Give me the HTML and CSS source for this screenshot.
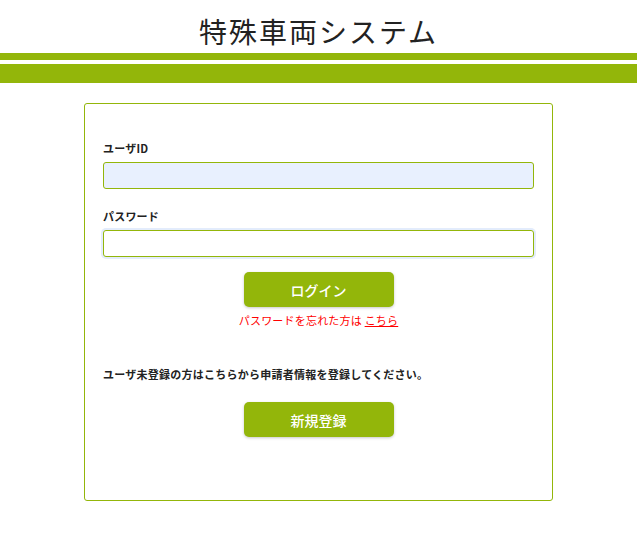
FILE: index.html
```html
<!DOCTYPE html>
<html lang="ja">
<head>
<meta charset="utf-8">
<title>特殊車両システム</title>
<link rel="stylesheet" href="styles.css">
</head>
<body>
<header class="site-header">
  <h1 class="site-title">特殊車両システム</h1>
  <div class="band band-thin"></div>
  <div class="band band-thick"></div>
</header>
<main class="login-card">
  <div class="field">
    <label class="field-label" for="uid">ユーザID</label>
    <input class="field-input autofill" id="uid" type="text">
  </div>
  <div class="field field-second">
    <label class="field-label" for="pw">パスワード</label>
    <input class="field-input focused" id="pw" type="password">
  </div>
  <div class="action">
    <button class="btn" type="button">ログイン</button>
  </div>
  <p class="forgot">パスワードを忘れた方は <a href="#" class="forgot-link">こちら</a></p>
  <p class="register-note">ユーザ未登録の方はこちらから申請者情報を登録してください。</p>
  <div class="action action-register">
    <button class="btn" type="button">新規登録</button>
  </div>
</main>
</body>
</html>
```
FILE: styles.css
```css
html, body {
  margin: 0;
  padding: 0;
  background: #ffffff;
}
body {
  font-family: "Noto Sans CJK JP", "Noto Sans", sans-serif;
  color: #222222;
}
.site-header {
  padding-top: 12px;
}
.site-title {
  margin: 0 0 2px 0;
  font-size: 28px;
  line-height: 39px;
  font-weight: 400;
  letter-spacing: 2px;
  text-align: center;
  color: #222222;
}
.band {
  background: #93b60a;
}
.band-thin {
  height: 7px;
}
.band-thick {
  height: 19px;
  margin-top: 4px;
}
.login-card {
  box-sizing: border-box;
  width: 469px;
  margin: 20px auto 0;
  border: 1px solid #93b60a;
  border-radius: 3px;
  padding: 36px 18px 63px 18px;
}
.field {
  display: flex;
  flex-direction: column;
}
.field-second {
  margin-top: 19px;
}
.field-label {
  font-size: 11px;
  line-height: 16px;
  font-weight: 700;
  letter-spacing: 0.2px;
  margin-bottom: 6px;
  color: #222222;
}
.field-input {
  box-sizing: border-box;
  height: 27px;
  width: 100%;
  border: 1px solid #93b60a;
  border-radius: 3px;
  background: #ffffff;
  outline: none;
  margin: 0;
  padding: 0 6px;
  font-family: inherit;
}
.field-input.autofill {
  background: #e8f0fe;
}
.field-input.focused {
  box-shadow: 0 0 0 2px #e3ecfc;
}
.action {
  display: flex;
  justify-content: center;
  margin-top: 15px;
}
.action-register {
  margin-top: 20px;
}
.btn {
  width: 150px;
  height: 35px;
  border: none;
  border-radius: 5px;
  background: #93b60a;
  color: #ffffff;
  font-family: inherit;
  font-size: 14px;
  font-weight: 500;
  box-shadow: 0 1px 3px rgba(0, 0, 0, 0.22);
  cursor: pointer;
}
.forgot {
  margin: 5px 0 0 0;
  text-align: center;
  font-size: 11px;
  line-height: 16px;
  letter-spacing: 0.2px;
  color: #ff0000;
}
.forgot-link {
  color: #ff0000;
  text-decoration: underline;
}
.register-note {
  margin: 38px 0 0 0;
  font-size: 11px;
  line-height: 16px;
  font-weight: 700;
  letter-spacing: 0.25px;
  color: #222222;
}
```
